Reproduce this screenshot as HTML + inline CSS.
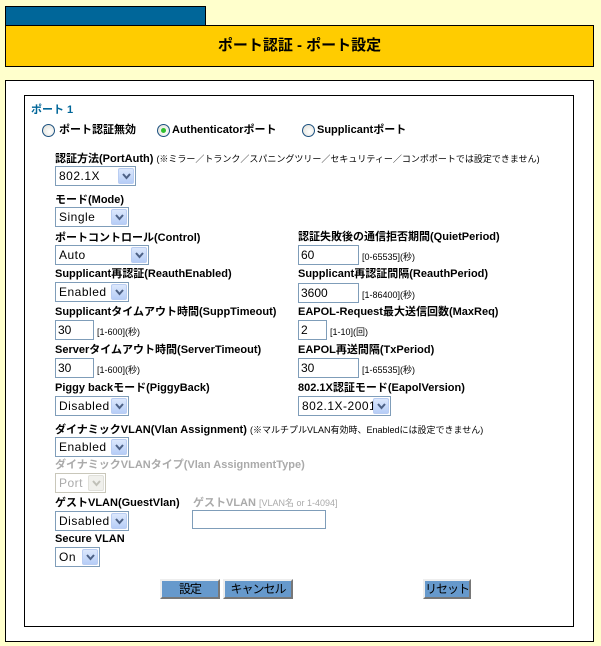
<!DOCTYPE html>
<html><head><meta charset="utf-8"><style>
*{box-sizing:border-box;margin:0;padding:0}
body{width:601px;height:646px;background:#ffffcc;position:relative;overflow:hidden;font-family:"Liberation Sans","Noto Sans CJK JP",sans-serif;font-size:11px;color:#000}
.a{position:absolute;white-space:nowrap}
.l{font-weight:bold;font-size:11px;line-height:13px}
.n{font-weight:normal;font-size:9px}
.s{position:absolute;height:20px;background:#fff;border:1px solid #7f9db9;font-family:"Liberation Sans","Noto Sans CJK JP",sans-serif;font-size:12px;line-height:18px;padding-left:3px;white-space:nowrap;overflow:hidden;letter-spacing:0.5px}
.s i{position:absolute;right:1px;top:1px;width:16px;height:16px;background:linear-gradient(#dce8fc,#b6cdf7);border:1px solid #b9cdf2;border-radius:2px}
.s i svg{position:absolute;left:3px;top:4px}
.t{position:absolute;height:20px;background:#fff;border:1px solid #7f9db9;font-size:12px;line-height:18px;padding-left:2px}
.r{position:absolute;width:13px;height:13px;border-radius:50%;border:1px solid #1c5180;background:radial-gradient(circle at 60% 60%,#fff,#dcdcd4)}
.b{position:absolute;height:20px;background:#6699cc;border:2px solid;border-color:#eee #777 #777 #eee;font-size:12px;text-align:center;line-height:16px;white-space:nowrap;overflow:hidden;letter-spacing:-1px}
.g{color:#aaa}
</style></head><body>
<div class="a" style="left:5px;top:6px;width:201px;height:20px;background:#006699;border:1px solid #000"></div>
<div class="a" style="left:5px;top:25px;width:589px;height:42px;background:#ffcc00;border:1px solid #000;text-align:center;font-size:15px;font-weight:bold;line-height:40px">ポート認証 - ポート設定</div>
<div class="a" style="left:5px;top:80px;width:589px;height:562px;background:#fff;border:1px solid #000"></div>
<div class="a" style="left:24px;top:95px;width:550px;height:532px;border:1px solid #000"></div>

<div class="a l" style="left:31px;top:104px;color:#006699">ポート 1</div>
<div class="r" style="left:42px;top:124px"></div><div class="a l" style="left:59px;top:124px">ポート認証無効</div>
<div class="r" style="left:157px;top:124px"><div style="position:absolute;left:3px;top:3px;width:5px;height:5px;border-radius:50%;background:#2fbf2f"></div></div><div class="a l" style="left:172px;top:124px">Authenticatorポート</div>
<div class="r" style="left:302px;top:124px"></div><div class="a l" style="left:317px;top:124px">Supplicantポート</div>

<div class="a l" style="left:55px;top:153px">認証方法(PortAuth) <span class="n">(※ミラー／トランク／スパニングツリー／セキュリティー／コンポポートでは設定できません)</span></div>
<div class="s" style="left:55px;top:166px;width:81px">802.1X<i><svg width="9" height="7"><path d="M1 1l3.5 4 3.5-4" stroke="#4d6185" stroke-width="2" fill="none"/></svg></i></div>

<div class="a l" style="left:55px;top:194px">モード(Mode)</div>
<div class="s" style="left:55px;top:207px;width:74px">Single<i><svg width="9" height="7"><path d="M1 1l3.5 4 3.5-4" stroke="#4d6185" stroke-width="2" fill="none"/></svg></i></div>

<div class="a l" style="left:55px;top:232px">ポートコントロール(Control)</div>
<div class="s" style="left:55px;top:245px;width:94px">Auto<i><svg width="9" height="7"><path d="M1 1l3.5 4 3.5-4" stroke="#4d6185" stroke-width="2" fill="none"/></svg></i></div>
<div class="a l" style="left:298px;top:231px">認証失敗後の通信拒否期間(QuietPeriod)</div>
<div class="t" style="left:298px;top:245px;width:61px">60</div><div class="a n" style="left:362px;top:250px">[0-65535](秒)</div>

<div class="a l" style="left:55px;top:268px">Supplicant再認証(ReauthEnabled)</div>
<div class="s" style="left:55px;top:282px;width:74px">Enabled<i><svg width="9" height="7"><path d="M1 1l3.5 4 3.5-4" stroke="#4d6185" stroke-width="2" fill="none"/></svg></i></div>
<div class="a l" style="left:298px;top:268px">Supplicant再認証間隔(ReauthPeriod)</div>
<div class="t" style="left:298px;top:283px;width:61px">3600</div><div class="a n" style="left:362px;top:288px">[1-86400](秒)</div>

<div class="a l" style="left:55px;top:306px">Supplicantタイムアウト時間(SuppTimeout)</div>
<div class="t" style="left:55px;top:320px;width:39px">30</div><div class="a n" style="left:97px;top:325px">[1-600](秒)</div>
<div class="a l" style="left:298px;top:306px">EAPOL-Request最大送信回数(MaxReq)</div>
<div class="t" style="left:298px;top:320px;width:29px">2</div><div class="a n" style="left:330px;top:325px">[1-10](回)</div>

<div class="a l" style="left:55px;top:344px">Serverタイムアウト時間(ServerTimeout)</div>
<div class="t" style="left:55px;top:358px;width:39px">30</div><div class="a n" style="left:97px;top:363px">[1-600](秒)</div>
<div class="a l" style="left:298px;top:344px">EAPOL再送間隔(TxPeriod)</div>
<div class="t" style="left:298px;top:358px;width:61px">30</div><div class="a n" style="left:362px;top:363px">[1-65535](秒)</div>

<div class="a l" style="left:55px;top:382px">Piggy backモード(PiggyBack)</div>
<div class="s" style="left:55px;top:396px;width:74px">Disabled<i><svg width="9" height="7"><path d="M1 1l3.5 4 3.5-4" stroke="#4d6185" stroke-width="2" fill="none"/></svg></i></div>
<div class="a l" style="left:298px;top:382px">802.1X認証モード(EapolVersion)</div>
<div class="s" style="left:298px;top:396px;width:93px">802.1X-2001<i><svg width="9" height="7"><path d="M1 1l3.5 4 3.5-4" stroke="#4d6185" stroke-width="2" fill="none"/></svg></i></div>

<div class="a l" style="left:55px;top:424px">ダイナミックVLAN(Vlan Assignment) <span class="n">(※マルチプルVLAN有効時、Enabledには設定できません)</span></div>
<div class="s" style="left:55px;top:437px;width:74px">Enabled<i><svg width="9" height="7"><path d="M1 1l3.5 4 3.5-4" stroke="#4d6185" stroke-width="2" fill="none"/></svg></i></div>

<div class="a l g" style="left:55px;top:459px">ダイナミックVLANタイプ(Vlan AssignmentType)</div>
<div class="s g" style="left:55px;top:473px;width:51px;border-color:#c9c7ba">Port<i style="background:#f0f0ec;border-color:#e0e0da"><svg width="9" height="7"><path d="M1 1l3.5 4 3.5-4" stroke="#c0c0b8" stroke-width="2" fill="none"/></svg></i></div>

<div class="a l" style="left:55px;top:497px">ゲストVLAN(GuestVlan)</div>
<div class="a l g" style="left:193px;top:497px">ゲストVLAN <span class="n">[VLAN名 or 1-4094]</span></div>
<div class="s" style="left:55px;top:511px;width:74px">Disabled<i><svg width="9" height="7"><path d="M1 1l3.5 4 3.5-4" stroke="#4d6185" stroke-width="2" fill="none"/></svg></i></div>
<div class="t" style="left:192px;top:510px;width:134px;height:19px"></div>

<div class="a l" style="left:55px;top:533px">Secure VLAN</div>
<div class="s" style="left:55px;top:547px;width:45px">On<i><svg width="9" height="7"><path d="M1 1l3.5 4 3.5-4" stroke="#4d6185" stroke-width="2" fill="none"/></svg></i></div>

<div class="b" style="left:160px;top:579px;width:60px">設定</div>
<div class="b" style="left:223px;top:579px;width:70px">キャンセル</div>
<div class="b" style="left:423px;top:579px;width:48px">リセット</div>
</body></html>
